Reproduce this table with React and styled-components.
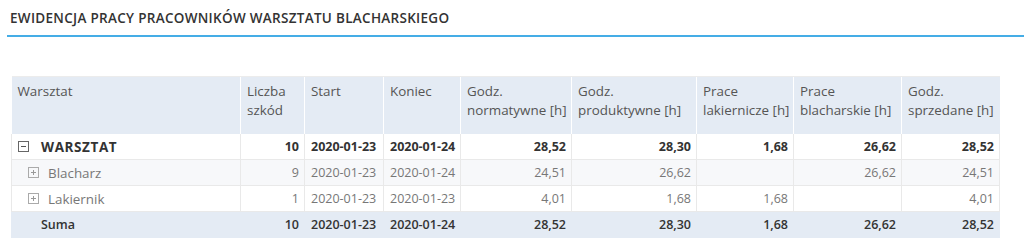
import { createGlobalStyle } from 'styled-components';
import styled from 'styled-components';

const GlobalStyle = createGlobalStyle`
  body {
    margin: 0;
    background: #fff;
    font-family: "Open Sans", "Noto Sans", sans-serif;
  }
`;

const Page = styled.div`
  padding: 9px 6px 0 7px;
`;

const Title = styled.h1`
  margin: 0;
  padding: 0 0 8px 3px;
  font-size: 13.5px;
  letter-spacing: 0.3px;
  line-height: 18px;
  font-weight: 600;
  color: #333;
  border-bottom: 2px solid #45ade6;
`;

const TableWrap = styled.div`
  padding: 39px 0 0 4px;
`;

const Table = styled.table`
  border-collapse: collapse;
  table-layout: fixed;
  width: 988px;
  font-size: 12.5px;
`;

const HeadCell = styled.th`
  background: #e4ebf4;
  color: #555;
  font-size: 13.4px;
  font-weight: 400;
  text-align: left;
  vertical-align: top;
  padding: 5px 4px 0 6px;
  height: 52px;
  line-height: 19px;
  white-space: nowrap;
  border-left: 1px solid #fff;
  border-top: 1px solid #ececec;
  &:first-child {
    border-left: none;
  }
`;

const Row = styled.tr`
  background: ${(p) => (p.$tone === 'sum' ? '#e4ebf4' : p.$tone === 'alt' ? '#f7f8fa' : '#fff')};
  color: ${(p) => (p.$child ? '#777' : '#333')};
  font-weight: ${(p) => (p.$bold ? 700 : p.$semi ? 600 : 400)};
`;

const Cell = styled.td`
  height: 25px;
  padding: 0 5px 0 6px;
  text-align: ${(p) => (p.$left ? 'left' : 'right')};
  white-space: nowrap;
  border: 1px solid #e9e9e9;
  border-top: none;
  ${(p) => p.$sum && 'border-color: #e4ebf4; border-left: 1px solid #e4ebf4;'}
`;

const DateCell = styled(Cell)`
  text-align: left;
`;

const NameWrap = styled.div`
  display: flex;
  align-items: center;
  gap: ${(p) => p.$gap}px;
  padding-left: ${(p) => p.$indent}px;
  font-size: ${(p) => p.$size}px;
  letter-spacing: ${(p) => p.$spacing || 0}px;
`;

const Toggle = styled.span`
  width: 9px;
  height: 9px;
  border: 1px solid ${(p) => (p.$dark ? '#666' : '#aaa')};
  position: relative;
  flex: none;
  &::before {
    content: '';
    position: absolute;
    left: 2px;
    right: 2px;
    top: 4px;
    height: 1px;
    background: ${(p) => (p.$dark ? '#555' : '#999')};
  }
  &::after {
    content: '';
    display: ${(p) => (p.$open ? 'none' : 'block')};
    position: absolute;
    top: 2px;
    bottom: 2px;
    left: 4px;
    width: 1px;
    background: #999;
  }
`;

const cols = [229, 64, 79, 77, 111, 125, 97, 108, 98];

const headers = [
  ['Warsztat'],
  ['Liczba', 'szkód'],
  ['Start'],
  ['Koniec'],
  ['Godz.', 'normatywne [h]'],
  ['Godz.', 'produktywne [h]'],
  ['Prace', 'lakiernicze [h]'],
  ['Prace', 'blacharskie [h]'],
  ['Godz.', 'sprzedane [h]'],
];

const rows = [
  { name: 'WARSZTAT', kind: 'root', vals: ['10', '2020-01-23', '2020-01-24', '28,52', '28,30', '1,68', '26,62', '28,52'] },
  { name: 'Blacharz', kind: 'child', tone: 'alt', vals: ['9', '2020-01-23', '2020-01-24', '24,51', '26,62', '', '26,62', '24,51'] },
  { name: 'Lakiernik', kind: 'child', vals: ['1', '2020-01-23', '2020-01-23', '4,01', '1,68', '1,68', '', '4,01'] },
  { name: 'Suma', kind: 'sum', tone: 'sum', vals: ['10', '2020-01-23', '2020-01-24', '28,52', '28,30', '1,68', '26,62', '28,52'] },
];

function NameCell({ row }) {
  if (row.kind === 'root') {
    return (
      <NameWrap $indent={0} $gap={12} $size={13.5} $spacing={0.6}>
        <Toggle $open $dark />
        <span>{row.name}</span>
      </NameWrap>
    );
  }
  if (row.kind === 'child') {
    return (
      <NameWrap $indent={10} $gap={9} $size={13.4}>
        <Toggle />
        <span>{row.name}</span>
      </NameWrap>
    );
  }
  return (
    <NameWrap $indent={23} $gap={0} $size={12.5}>
      {row.name}
    </NameWrap>
  );
}

export default function App() {
  return (
    <Page>
      <GlobalStyle />
      <Title>EWIDENCJA PRACY PRACOWNIKÓW WARSZTATU BLACHARSKIEGO</Title>
      <TableWrap>
        <Table>
          <colgroup>
            {cols.map((w, i) => (
              <col key={i} style={{ width: w }} />
            ))}
          </colgroup>
          <thead>
            <tr>
              {headers.map((h, i) => (
                <HeadCell key={i}>
                  {h.map((line, j) => (
                    <div key={j}>{line}</div>
                  ))}
                </HeadCell>
              ))}
            </tr>
          </thead>
          <tbody>
            {rows.map((r) => (
              <Row
                key={r.name}
                $tone={r.tone}
                $child={r.kind === 'child'}
                $bold={r.kind === 'root'}
                $semi={r.kind === 'sum'}
              >
                <Cell $left $sum={r.kind === 'sum'}>
                  <NameCell row={r} />
                </Cell>
                {r.vals.map((v, i) =>
                  i === 1 || i === 2 ? (
                    <DateCell key={i} $sum={r.kind === 'sum'}>{v}</DateCell>
                  ) : (
                    <Cell key={i} $sum={r.kind === 'sum'}>{v}</Cell>
                  )
                )}
              </Row>
            ))}
          </tbody>
        </Table>
      </TableWrap>
    </Page>
  );
}
